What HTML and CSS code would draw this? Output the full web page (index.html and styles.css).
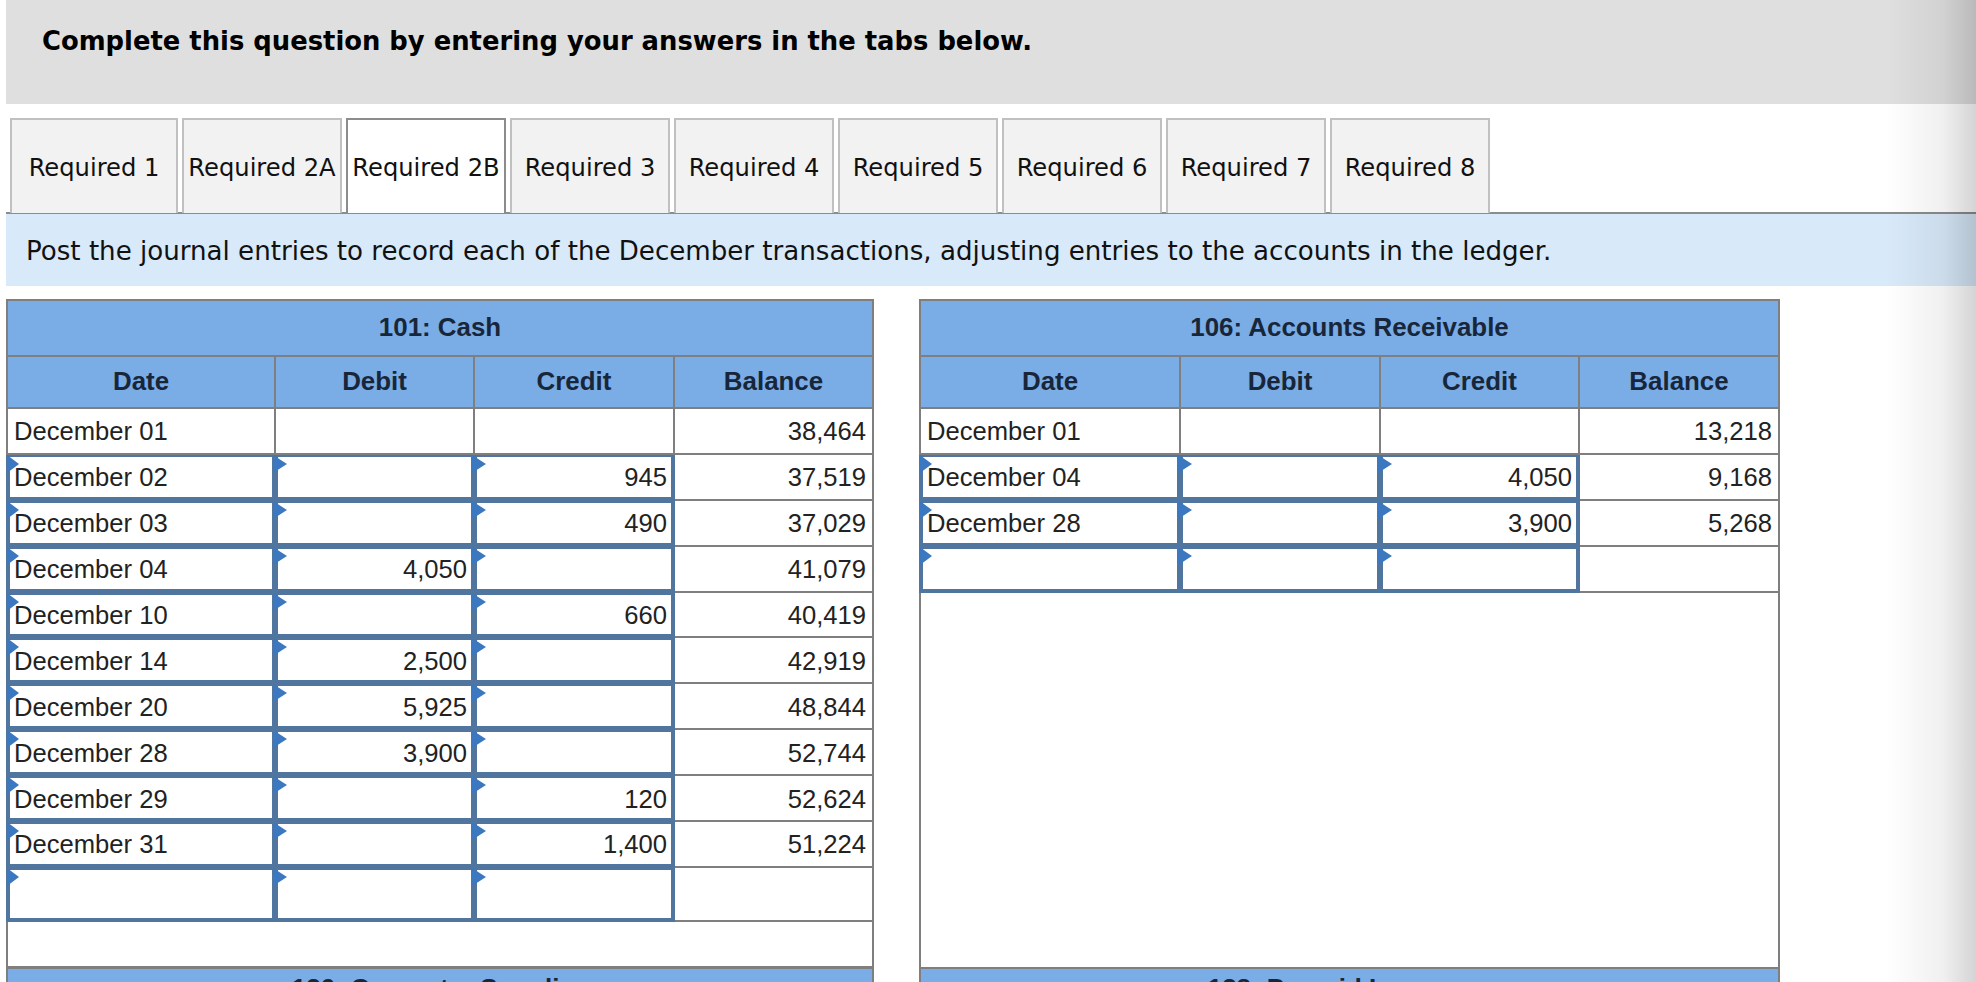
FILE: index.html
```html
<!DOCTYPE html>
<html lang="en">
<head>
<meta charset="utf-8">
<title>Ledger</title>
<link rel="stylesheet" href="styles.css">
</head>
<body>
<div class="page">
  <header class="prompt"><h1>Complete this question by entering your answers in the tabs below.</h1></header>
  <nav class="tabs">
    <a class="tab t1">Required 1</a>
    <a class="tab">Required 2A</a>
    <a class="tab active">Required 2B</a>
    <a class="tab">Required 3</a>
    <a class="tab">Required 4</a>
    <a class="tab">Required 5</a>
    <a class="tab">Required 6</a>
    <a class="tab">Required 7</a>
    <a class="tab">Required 8</a>
  </nav>
  <p class="instruction">Post the journal entries to record each of the December transactions, adjusting entries to the accounts in the ledger.</p>
  <div class="ledgers">
    <table class="ledger left">
      <colgroup><col class="c1"><col class="c2"><col class="c3"><col class="c4"></colgroup>
      <thead>
        <tr class="title"><th colspan="4">101: Cash</th></tr>
        <tr class="heads"><th>Date</th><th>Debit</th><th>Credit</th><th>Balance</th></tr>
      </thead>
      <tbody>
        <tr><td>December 01</td><td></td><td></td><td class="num">38,464</td></tr>
        <tr><td class="in">December 02</td><td class="in num"></td><td class="in num">945</td><td class="num">37,519</td></tr>
        <tr><td class="in">December 03</td><td class="in num"></td><td class="in num">490</td><td class="num">37,029</td></tr>
        <tr><td class="in">December 04</td><td class="in num">4,050</td><td class="in num"></td><td class="num">41,079</td></tr>
        <tr><td class="in">December 10</td><td class="in num"></td><td class="in num">660</td><td class="num">40,419</td></tr>
        <tr><td class="in">December 14</td><td class="in num">2,500</td><td class="in num"></td><td class="num">42,919</td></tr>
        <tr><td class="in">December 20</td><td class="in num">5,925</td><td class="in num"></td><td class="num">48,844</td></tr>
        <tr><td class="in">December 28</td><td class="in num">3,900</td><td class="in num"></td><td class="num">52,744</td></tr>
        <tr><td class="in">December 29</td><td class="in num"></td><td class="in num">120</td><td class="num">52,624</td></tr>
        <tr><td class="in">December 31</td><td class="in num"></td><td class="in num">1,400</td><td class="num">51,224</td></tr>
        <tr class="tall"><td class="in"></td><td class="in"></td><td class="in"></td><td></td></tr>
        <tr class="blank"><td colspan="4"></td></tr>
      </tbody>
    </table>
    <table class="ledger right">
      <colgroup><col class="c1"><col class="c2"><col class="c3"><col class="c4"></colgroup>
      <thead>
        <tr class="title"><th colspan="4">106: Accounts Receivable</th></tr>
        <tr class="heads"><th>Date</th><th>Debit</th><th>Credit</th><th>Balance</th></tr>
      </thead>
      <tbody>
        <tr><td>December 01</td><td></td><td></td><td class="num">13,218</td></tr>
        <tr><td class="in">December 04</td><td class="in num"></td><td class="in num">4,050</td><td class="num">9,168</td></tr>
        <tr><td class="in">December 28</td><td class="in num"></td><td class="in num">3,900</td><td class="num">5,268</td></tr>
        <tr><td class="in"></td><td class="in"></td><td class="in"></td><td></td></tr>
        <tr class="filler"><td colspan="4"></td></tr>
      </tbody>
    </table>
    <table class="ledger left next">
      <thead><tr class="title"><th>126: Computer Supplies</th></tr></thead>
    </table>
    <table class="ledger right next">
      <thead><tr class="title"><th>128: Prepaid Insurance</th></tr></thead>
    </table>
  </div>
</div>
</body>
</html>
```
FILE: styles.css
```css
* { box-sizing: border-box; }
html, body { margin: 0; height: 100%; overflow: hidden; background: #fff; }
.page { position: relative; width: 1976px; height: 982px; overflow: hidden; padding-left: 6px; }
.page::after {
  content: ""; position: absolute; top: 0; right: 0; bottom: 0; width: 90px;
  background: linear-gradient(to right, rgba(0,0,0,0), rgba(0,0,0,.06) 63%, rgba(0,0,0,.17));
  pointer-events: none;
}
.prompt { height: 104px; background: #dfdfdf; padding: 24px 0 0 36px; }
.prompt h1 { margin: 0; font: 700 25.83px/34px "DejaVu Sans", sans-serif; color: #000; }
.tabs { display: flex; height: 110px; padding: 14px 0 0 4px; gap: 4px; border-bottom: 2px solid #8c8c8c; }
.tab {
  flex: 0 0 160px; height: 95px; margin-bottom: -1px; padding-top: 2px;
  display: flex; align-items: center; justify-content: center;
  background: #f2f2f2; border: 2px solid #c0c0c0; border-bottom: 0;
  font: 400 24.2px "DejaVu Sans", sans-serif; color: #111; white-space: nowrap;
}
.tab.t1 { flex-basis: 168px; }
.tab.active { background: #fff; border: 2px solid #8c8c8c; border-bottom: 0; }
.instruction {
  margin: 0; height: 72px; background: #d8e9f9; padding: 20px 0 0 20px;
  font: 400 26.1px/34px "DejaVu Sans", sans-serif; color: #111;
}
.ledgers { display: grid; grid-template-columns: 868px 861px; column-gap: 45px; margin-top: 13px; align-items: start; }
.ledger { border-collapse: collapse; table-layout: fixed; width: 100%; font: 400 25.6px "Liberation Sans", sans-serif; color: #222; }
.ledger th, .ledger td { border: 2px solid #7f7f7f; padding: 0 6px; }
.ledger th { background: #7aace6; color: #18263a; font-size: 25.9px; font-weight: 700; text-align: center; padding-bottom: 2px; }
.title th { height: 56px; }
.heads th { height: 52px; }
.ledger td { height: 45.9px; background: #fff; padding-top: 2px; }
.ledger td.num { text-align: right; }
.ledger td.in { position: relative; border-color: #50759f; box-shadow: inset 0 0 0 2px #50759f; }
.ledger td.in::before {
  content: ""; position: absolute; top: 0; left: -3px;
  border-style: solid; border-width: 9px 0 9px 14px;
  border-color: transparent transparent transparent #3b78bf;
}
.ledger td.in:first-child::before { left: -1px; border-width: 9px 0 9px 12px; }
.tall td { height: 54px; }
.ledger .blank td { height: 46px; }
.ledger .filler td { height: 376px; }
.next { margin-top: -2px; }
.ledger.next th { padding-bottom: 14px; }
.left .c1 { width: 268px; } .left .c2 { width: 199px; } .left .c3 { width: 200px; }
.right .c1 { width: 260px; } .right .c2 { width: 200px; } .right .c3 { width: 199px; }
```
